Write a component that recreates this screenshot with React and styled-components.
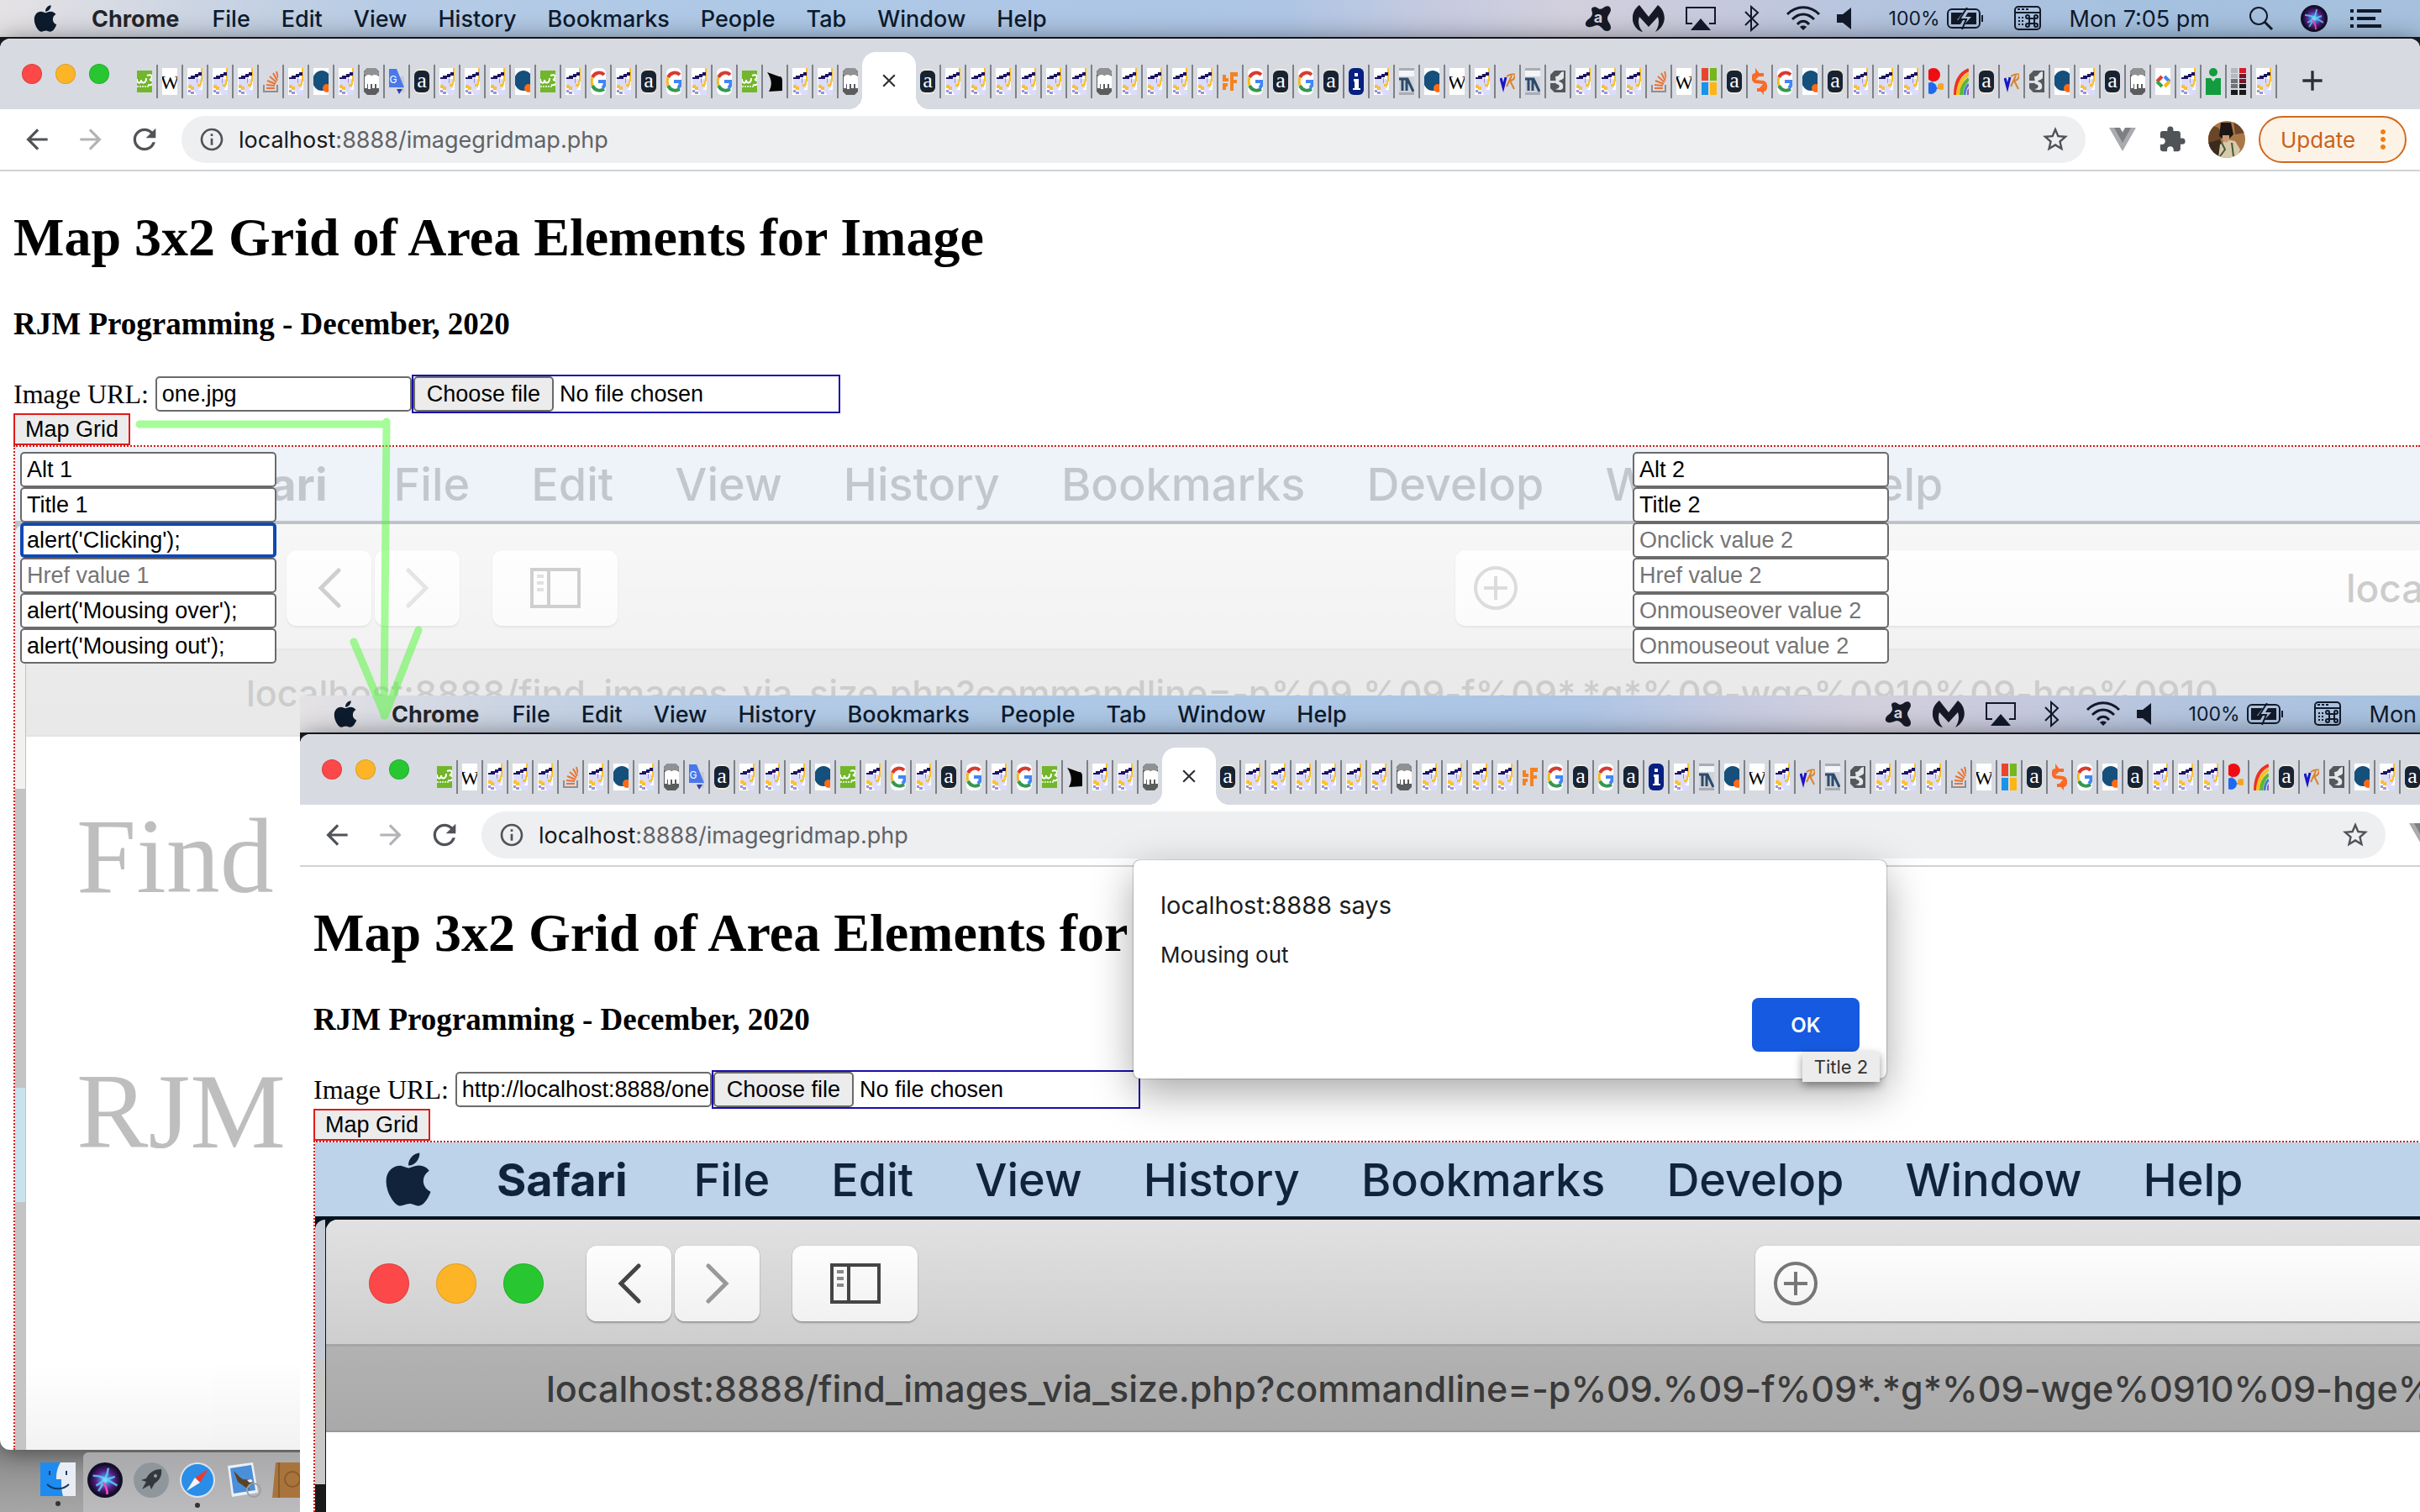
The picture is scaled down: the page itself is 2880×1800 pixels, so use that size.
import React from "react";
import styled, { createGlobalStyle } from "styled-components";
import { FaApple } from "react-icons/fa";
import {
  MdAdd,
  MdArrowBack,
  MdArrowForward,
  MdClose,
  MdExtension,
  MdInfoOutline,
  MdMoreVert,
  MdRefresh,
  MdStarBorder,
} from "react-icons/md";

const UI_FONT = `Inter, Roboto, "Liberation Sans", sans-serif`;
const PAGE_FONT = `"Liberation Serif", "Times New Roman", serif`;
const FORM_FONT = `"Liberation Sans", Arial, sans-serif`;

const CHROME_MENU = ["File", "Edit", "View", "History", "Bookmarks", "People", "Tab", "Window", "Help"];
const SAFARI_MENU = ["File", "Edit", "View", "History", "Bookmarks", "Develop", "Window", "Help"];

const rjm = (n) => Array(n).fill("rjm");
const TABS_BEFORE = [
  "w3", "wiki", ...rjm(3), "stack", "rjm", "quote", "rjm", "php", "translate", "amz",
  ...rjm(3), "quote", "w3", "rjm", "google", "rjm", "amz", "google", "rjm", "google",
  "w3", "flag", ...rjm(2), "php",
];
const TABS_AFTER = [
  "amz", ...rjm(6), "php", ...rjm(4), "cf", "google", "amz", "google", "amz", "info",
  "rjm", "pillar", "quote", "wiki", "rjm", "vr", "pillar", "swirl", ...rjm(3), "stack",
  "wiki", "windows", "amz", "script", "google", "quote", "amz", ...rjm(3), "balls",
  "rainbow", "amz", "vr", "swirl", "quote", "rjm", "amz", "php", "dev", "rjm", "person",
  "grid", "rjm",
];

const FIELDS = ["Alt", "Title", "Onclick value", "Href value", "Onmouseover value", "Onmouseout value"];
const CELLS = [
  ["Alt 1", "Title 1", "alert('Clicking');", "", "alert('Mousing over');", "alert('Mousing out');"],
  ["Alt 2", "Title 2", "", "", "", ""],
];

// favicons are cropped to 18x32 because the tabs are so narrow
const FAVICONS = {
  rjm: (
    <>
      <path d="M0 0h18v32H0z" fill="#fff" />
      <path d="M1 13h15v10l-3 3h5v6h-7l-3-5-7-4z" fill="#dcdcfb" />
      <path d="M16 0h2v16h-2zM15 15h2v5h-2zM12 19h4v3h-4zM1 20h4v2h3v4H4v-2H1z" fill="#fbc02d" />
      <path d="M1 11h3V9h5V7h4V5h4v4h-4v2H9v2H1z" fill="#1c1463" />
      <path d="M1 26h3v2h4v3H4v-2H1zM11 12h1v6h-1z" fill="#9a94d8" />
    </>
  ),
  w3: (
    <>
      <path d="M0 3h18v26H0z" fill="#72b62b" />
      <path d="M0 13c0 6 5 6 5 1 0 5 6 5 6-2M12 9c6-3 8 3 3 5 6 0 5 8-2 6" fill="none" stroke="#fff" strokeWidth="2" />
      <path d="M0 22h15" stroke="#d9efc2" strokeWidth="2" strokeDasharray="2 1" />
    </>
  ),
  wiki: (
    <>
      <path d="M0 0h18v32H0z" fill="#fff" />
      <text x="9" y="25" fontSize="24" textAnchor="middle" fontFamily="Liberation Serif" fill="#000">W</text>
    </>
  ),
  stack: (
    <>
      <path d="M1 20v8h16v-8" fill="none" stroke="#8b8f94" strokeWidth="2" />
      <path d="M4 24h10M4 20l10 1M5 15l10 4M8 10l8 7M12 6l5 9M16 4l2 8" stroke="#e87434" strokeWidth="2" />
    </>
  ),
  quote: (
    <>
      <path d="M0 0h18v32H0z" fill="#fff" />
      <ellipse cx="10" cy="15" rx="11" ry="12" fill="#154f7c" />
      <circle cx="16" cy="24" r="5" fill="#ff6a13" />
    </>
  ),
  php: (
    <>
      <path d="M4 0h10l4 4v24l-4 4H4l-4-4V4z" fill="#5b5c5e" />
      <path d="M4 0h10l4 5v3H0V5z" fill="#909193" />
      <path d="M1 11c1-4 7-3 8-2 3-2 8-1 9 1v14h-3v-5h-2v5h-3v-5H8v6H5v-6H4v5H1z" fill="#fff" />
    </>
  ),
  translate: (
    <>
      <path d="M9 10h9v19h-6z" fill="#c9ccd2" />
      <path d="M0 1h9l9 22H0z" fill="#4a78ea" />
      <path d="M9 25h7l-4 6z" fill="#2a3fb5" />
      <text x="5" y="18" fontSize="12" textAnchor="middle" fontFamily="Inter" fill="#fff">G</text>
    </>
  ),
  amz: (
    <>
      <rect y="1" width="18" height="30" rx="6" fill="#f0ead8" />
      <rect y="3" width="18" height="26" rx="6" fill="#172333" />
      <text x="9" y="23" fontSize="26" textAnchor="middle" fontFamily="Liberation Serif" fill="#fff">a</text>
    </>
  ),
  google: (
    <>
      <rect width="18" height="32" rx="6" fill="#fff" />
      <path d="M2 11C5 5 12 4 16 8" fill="none" stroke="#d93a2f" strokeWidth="4" />
      <path d="M2 11c-1 3-1 7 0 10" fill="none" stroke="#f6b91a" strokeWidth="3" />
      <path d="M2 21c3 6 9 7 14 4" fill="none" stroke="#34994f" strokeWidth="4" />
      <path d="M9 16h8c0 4-1 6-3 8" fill="none" stroke="#4285f4" strokeWidth="4" />
    </>
  ),
  flag: <path d="M0 5l14 5c3 0 4 2 4 5v12L2 28c4-7 4-14-2-23z" fill="#050505" />,
  cf: (
    <>
      <path d="M9 5h9v5h-5v4h4v4h-4v9H9z" fill="#f58220" />
      <path d="M0 8h4v4h3v4H0zM0 18h6v4H4v4H0z" fill="#f58220" />
    </>
  ),
  info: (
    <>
      <rect width="18" height="32" rx="6" fill="#061f80" />
      <path d="M6 13h6v11h2v2H5v-2h2v-8H6zM7 6h4v4H7z" fill="#fff" />
    </>
  ),
  pillar: (
    <>
      <path d="M0 0h18v32H0z" fill="#ced2da" />
      <path d="M0 3h18v7H0z" fill="#f3f5f8" />
      <path d="M0 0h18v3H0zM0 29h18v3H0z" fill="#a9adb2" />
      <path d="M0 13h10l7 15M4 14v13M9 14v13" fill="none" stroke="#2d4a6b" strokeWidth="3" />
    </>
  ),
  vr: (
    <>
      <path d="M1 12l3 11 3-12" fill="none" stroke="#1a14c8" strokeWidth="3" />
      <path d="M8 22l6-13M8 10c4-3 9-3 10-2M18 9c-1 5-4 6-6 6l5 10" fill="none" stroke="#d9822b" strokeWidth="2" />
    </>
  ),
  swirl: (
    <>
      <path d="M5 3h13v26H5L0 24v-6h8v-3H0V8z" fill="#55575a" />
      <path d="M6 10c6 0 4-5 10-6v7c0 3-5 3-6 5 4 1 6 3 5 8-2 3-6 2-9 1 5 0 7-5 1-6" fill="#e4e6ea" />
    </>
  ),
  windows: (
    <>
      <path d="M0 0h8v15H0z" fill="#e8452c" />
      <path d="M10 0h8v15h-8z" fill="#74b81c" />
      <path d="M0 17h8v15H0z" fill="#1a93e8" />
      <path d="M10 17h8v15h-8z" fill="#fdb515" />
    </>
  ),
  script: (
    <>
      <path d="M14 8H4c-3 0-3 7 0 8l9 1c4 1 4 8 1 9H6" fill="none" stroke="#fb6a25" strokeWidth="4" />
      <path d="M4 0l6 8-6 6zM14 18v14l-6-7z" fill="#fb6a25" />
    </>
  ),
  balls: (
    <>
      <path d="M6 8l-3 16h12" stroke="#999" strokeWidth="2" fill="none" />
      <circle cx="6" cy="8" r="8" fill="#f00d12" />
      <circle cx="3" cy="24" r="7" fill="#1d6af0" />
      <circle cx="15" cy="22" r="4" fill="#f8a51c" />
    </>
  ),
  rainbow: (
    <>
      <path d="M2 32C2 16 8 6 18 2" fill="none" stroke="#ee3124" strokeWidth="4" />
      <path d="M5 32C5 20 11 11 18 7" fill="none" stroke="#f7c21d" strokeWidth="4" />
      <path d="M9 32c0-9 4-15 9-19" fill="none" stroke="#5cb531" strokeWidth="4" />
      <path d="M13 32c0-5 2-10 5-13" fill="none" stroke="#3f7fd0" strokeWidth="3" />
      <path d="M16 32v-5l2-3v8z" fill="#9b59b6" />
    </>
  ),
  dev: (
    <>
      <path d="M0 0h18v32H0z" fill="#fff" />
      <path d="M8 10l-6 6" stroke="#e33b2e" strokeWidth="4" />
      <path d="M2 16l6 6" stroke="#31a350" strokeWidth="4" />
      <path d="M11 10l6 6" stroke="#4285f4" strokeWidth="4" />
      <path d="M17 16l-6 6" stroke="#f5b81c" strokeWidth="4" />
    </>
  ),
  person: (
    <>
      <circle cx="9" cy="5" r="5" fill="#139c3d" />
      <path d="M0 12h6l3 4 3-4h6v20H0z" fill="#139c3d" />
    </>
  ),
  grid: (
    <>
      <path d="M0 0h8v6H0zM0 7h8v5H0z" fill="#b6b8bd" />
      <path d="M0 13h8v5H0zM0 19h8v5H0z" fill="#717276" />
      <path d="M10 0h8v6h-8z" fill="#d51c2c" />
      <path d="M10 7h8v5h-8zM10 13h8v5h-8z" fill="#7d1326" />
      <path d="M0 26h8v6H0zM10 19h8v5h-8zM10 26h8v6h-8z" fill="#19191b" />
    </>
  ),
};

const SiriIcon = ({ size }) => (
  <svg width={size} height={size} viewBox="0 0 32 32" aria-hidden="true">
    <defs>
      <radialGradient id={`siri${size}`}>
        <stop offset="0" stopColor="#f4f6ff" />
        <stop offset="0.25" stopColor="#4a8be8" />
        <stop offset="0.6" stopColor="#5a1f86" />
        <stop offset="1" stopColor="#130c2c" />
      </radialGradient>
    </defs>
    <circle cx="16" cy="16" r="16" fill="#111026" />
    <circle cx="16" cy="16" r="14" fill={`url(#siri${size})`} />
    <path d="M5 12c8 0 12 3 22 9M19 5c-1 8-4 13-9 21M8 21c6-4 10-6 17-8" stroke="#59dcf5" strokeWidth="2" fill="none" opacity="0.8" />
    <path d="M14 18c3 3 4 6 4 11" stroke="#f24bb0" strokeWidth="2" fill="none" />
  </svg>
);

const StatusIcons = () => (
  <StatusArea>
    <StatusSlot $w={36}>
      <svg width="32" height="32" viewBox="0 0 32 32">
        <path d="M8 5c0-3 5-4 8-1 3 2 5 0 8-2 4-2 7 0 7 4-1 5-4 6-4 10s4 6 4 11c0 4-5 5-8 3-3-3-5-6-9-6-4 1-7 3-10 2-4-1-4-5-1-8 4-3 6-5 6-8 0-2-1-3-1-5z" fill="#171a26" />
        <text x="16" y="21" fontSize="18" fontWeight="700" textAnchor="middle" fontFamily="Inter" fill="#d3d2de">a</text>
      </svg>
    </StatusSlot>
    <StatusSlot $w={44}>
      <svg width="38" height="34" viewBox="0 0 38 34">
        <path d="M8 1l11 14L30 1c7 5 10 15 6 23-2 4-5 7-9 9 4-6 5-12 3-18L19 27 8 15c-2 6-1 12 4 18-5-1-9-5-11-10C-2 15 1 6 8 1z" fill="#171a26" />
      </svg>
    </StatusSlot>
    <StatusSlot $w={40}>
      <svg width="38" height="30" viewBox="0 0 38 30">
        <path d="M9 21H2V2h34v19h-7" fill="none" stroke="#121a2a" strokeWidth="2" />
        <path d="M19 15l12 14H7z" fill="#121a2a" />
      </svg>
    </StatusSlot>
    <StatusSlot $w={42}>
      <svg width="20" height="32" viewBox="0 0 20 32">
        <path d="M2 8l15 15-8 7V2l8 7L2 24" fill="none" stroke="#121a2a" strokeWidth="2" />
      </svg>
    </StatusSlot>
    <StatusSlot $w={40}>
      <svg width="42" height="32" viewBox="0 0 42 32">
        <path d="M2 11c11-11 27-11 38 0M8 17c8-8 18-8 26 0M14 23c4-5 10-5 14 0" fill="none" stroke="#121a2a" strokeWidth="3" />
        <path d="M21 30l-4-4c2-2 6-2 8 0z" fill="#121a2a" />
      </svg>
    </StatusSlot>
    <StatusSlot $w={42} $start>
      <svg width="18" height="26" viewBox="0 0 18 26">
        <path d="M0 8h7l10-8v26L7 18H0z" fill="#121a2a" />
      </svg>
    </StatusSlot>
    <Battery>
      100%
      <svg width="46" height="26" viewBox="0 0 46 26">
        <rect x="1" y="2" width="38" height="22" rx="5" fill="none" stroke="#121a2a" strokeWidth="2" />
        <path d="M5 6h14l-7 9h7l-3 5H5zM35 20H21l8-9h-7l3-5h10z" fill="#121a2a" />
        <path d="M24 0l-9 14h8l-5 12M42 9v8" stroke="#121a2a" strokeWidth="2" fill="none" />
      </svg>
    </Battery>
    <StatusSlot $w={60}>
      <svg width="32" height="30" viewBox="0 0 32 30">
        <rect x="1" y="1" width="30" height="27" rx="4" fill="none" stroke="#121a2a" strokeWidth="2" />
        <path d="M2 8h28" stroke="#121a2a" strokeWidth="2" />
        <path d="M4 4h3M9 4h3M14 4h3" stroke="#121a2a" strokeWidth="2" />
        <path d="M5 14h2M5 18h2M5 22h2M9 14h2M9 18h2M9 22h2" stroke="#121a2a" strokeWidth="2" />
        <g fill="none" stroke="#121a2a" strokeWidth="2">
          <path d="M18 15h6v6h-6z" />
          <circle cx="16" cy="13" r="2" />
          <circle cx="26" cy="13" r="2" />
          <circle cx="16" cy="23" r="2" />
          <circle cx="26" cy="23" r="2" />
        </g>
      </svg>
    </StatusSlot>
    <Clock>Mon 7:05 pm</Clock>
    <StatusSlot $w={42}>
      <svg width="30" height="30" viewBox="0 0 30 30">
        <circle cx="12" cy="12" r="10" fill="none" stroke="#121a2a" strokeWidth="2" />
        <path d="M19 19l9 9" stroke="#121a2a" strokeWidth="3" />
      </svg>
    </StatusSlot>
    <StatusSlot $w={44}>
      <SiriIcon size={32} />
    </StatusSlot>
    <StatusSlot $w={38}>
      <svg width="37" height="22" viewBox="0 0 37 22">
        <path d="M0 2h4M8 2h29M0 11h4M8 11h22M0 20h4M8 20h29" stroke="#121a2a" strokeWidth="4" />
      </svg>
    </StatusSlot>
  </StatusArea>
);

const Tab = ({ icon, last }) => (
  <TabItem $last={last}>
    <svg width="18" height="32" viewBox="0 0 18 32" aria-hidden="true">
      {FAVICONS[icon]}
    </svg>
  </TabItem>
);

// the picture that is loaded into the grid: the top left of a Safari window
const GridImage = ({ faded }) => (
  <Picture $faded={faded}>
    <SafariMenu>
      <FaApple size={72} />
      <strong>Safari</strong>
      {SAFARI_MENU.map((m) => (
        <span key={m}>{m}</span>
      ))}
    </SafariMenu>
    <SafariRow>
      <Behind />
      <SafariWindow>
        <SafariToolbar>
          <Lights $size={48} $gap={32}>
            <i />
            <i />
            <i />
          </Lights>
          <SafariNav>
            <SafariButton $w={101}>
              <svg width="28" height="48" viewBox="0 0 28 48">
                <path d="M25 3L4 24l21 21" fill="none" stroke="#444" strokeWidth="5" strokeLinecap="round" />
              </svg>
            </SafariButton>
            <SafariButton $w={101}>
              <svg width="28" height="48" viewBox="0 0 28 48">
                <path d="M3 3l21 21L3 45" fill="none" stroke="#999" strokeWidth="5" strokeLinecap="round" />
              </svg>
            </SafariButton>
          </SafariNav>
          <SafariButton $w={149}>
            <svg width="60" height="48" viewBox="0 0 60 48">
              <path d="M2 2h56v44H2zM22 2v44" fill="none" stroke="#444" strokeWidth="4" />
              <path d="M8 10h8M8 18h8M8 26h8" stroke="#888" strokeWidth="4" />
            </svg>
          </SafariButton>
          <SafariField>
            <svg width="52" height="52" viewBox="0 0 52 52">
              <circle cx="26" cy="26" r="24" fill="none" stroke="#777" strokeWidth="4" />
              <path d="M26 12v28M12 26h28" stroke="#777" strokeWidth="4" />
            </svg>
            <span>localhost</span>
          </SafariField>
        </SafariToolbar>
        <SafariTitle>
          localhost:8888/find_images_via_size.php?commandline=-p%09.%09-f%09*.*g*%09-wge%0910%09-hge%0910
        </SafariTitle>
        <SafariPage>
          <p>Find</p>
          <p>RJM</p>
        </SafariPage>
      </SafariWindow>
    </SafariRow>
  </Picture>
);

const Screen = ({ imageUrl, editing = false, children }) => (
  <ScreenWrapper>
    <MenuBar>
      <FaApple size={36} />
      <strong>Chrome</strong>
      {CHROME_MENU.map((m) => (
        <span key={m}>{m}</span>
      ))}
      <StatusIcons />
    </MenuBar>
    <BrowserWindow>
      <TabStrip>
        <Lights $size={24} $gap={16}>
          <i />
          <i />
          <i />
        </Lights>
        <TabList>
          {TABS_BEFORE.map((icon, key) => (
            <Tab key={`before_${key}`} icon={icon} last={key === TABS_BEFORE.length - 1} />
          ))}
          <ActiveTab>
            <TabButton aria-label="Close tab">
              <MdClose size={26} />
            </TabButton>
          </ActiveTab>
          {TABS_AFTER.map((icon, key) => (
            <Tab key={`after_${key}`} icon={icon} />
          ))}
        </TabList>
        <TabButton aria-label="New tab">
          <MdAdd size={40} />
        </TabButton>
      </TabStrip>
      <Toolbar>
        <ToolButton aria-label="Back">
          <MdArrowBack size={38} />
        </ToolButton>
        <ToolButton aria-label="Forward" $muted>
          <MdArrowForward size={38} />
        </ToolButton>
        <ToolButton aria-label="Reload">
          <MdRefresh size={40} />
        </ToolButton>
        <Omnibox>
          <MdInfoOutline size={32} />
          <Address>
            <b>localhost</b>:8888/imagegridmap.php
          </Address>
          <MdStarBorder size={36} />
        </Omnibox>
        <Extensions>
          <svg width="32" height="28" viewBox="0 0 32 28">
            <path d="M0 0h32L16 28z" fill="#a9abae" />
            <path d="M6 0h7l3 6 3-6h7L16 18z" fill="#7d7f83" />
            <path d="M13 0h6l-3 5z" fill="#fff" />
          </svg>
          <MdExtension size={34} />
          <svg width="44" height="44" viewBox="0 0 44 44">
            <clipPath id="face">
              <circle cx="22" cy="22" r="22" />
            </clipPath>
            <g clipPath="url(#face)">
              <path d="M0 0h44v44H0z" fill="#a87848" />
              <path d="M0 4l12 4 6 10-8 10-10 2zM30 0h14v14l-12 2z" fill="#6b4527" />
              <path d="M15 2h12l3 14-8 8-9-6z" fill="#1d1614" />
              <path d="M0 26l14-4 4 8-6 14H0z" fill="#3b2a1e" />
              <path d="M14 28l8-6 10 2 6 10-4 10H12z" fill="#d8c9a9" />
              <path d="M17 17h8v6l-4 3-4-3z" fill="#c99a76" />
              <path d="M16 26l4 8-6 8M28 26l2 16" stroke="#3d5a3c" strokeWidth="2" fill="none" />
            </g>
          </svg>
        </Extensions>
        <UpdateButton>
          Update
          <MdMoreVert size={36} />
        </UpdateButton>
      </Toolbar>
      <Page>
        <h1>Map 3x2 Grid of Area Elements for Image</h1>
        <h3>RJM Programming - December, 2020</h3>
        <FormRow>
          <UrlLabel>
            Image URL:
            <TextInput type="text" defaultValue={imageUrl} />
          </UrlLabel>
          <FileLabel>
            <FileButton>Choose file</FileButton>
            No file chosen
            <HiddenFile type="file" />
          </FileLabel>
        </FormRow>
        <MapButton>Map Grid</MapButton>
        <ImageBox>
          <GridImage faded={editing} />
          {editing && (
            <CellOverlay>
              {CELLS.map((values, c) => (
                <Cell key={`cell_${c}`}>
                  {values.map((value, i) => (
                    <TextInput
                      key={FIELDS[i]}
                      type="text"
                      aria-label={`${FIELDS[i]} ${c + 1}`}
                      placeholder={`${FIELDS[i]} ${c + 1}`}
                      defaultValue={value}
                      $active={c === 0 && i === 2}
                    />
                  ))}
                </Cell>
              ))}
            </CellOverlay>
          )}
        </ImageBox>
      </Page>
    </BrowserWindow>
    {editing && <Dock />}
    {children}
  </ScreenWrapper>
);

const Dock = () => (
  <DockRow>
    <DockStart>
      <DockApp $running>
        <svg width="42" height="40" viewBox="0 0 42 40">
          <path d="M0 0h42v40H0z" fill="#e8edf5" />
          <path d="M0 0h24c-4 7-5 12-5 20h6c0 8 0 13 2 20H0z" fill="#1e8bf0" />
          <path d="M11 10v5M31 10v5M8 26c7 7 19 7 26 0" fill="none" stroke="#143a66" strokeWidth="2" />
        </svg>
      </DockApp>
    </DockStart>
    <DockPanel>
      <DockApp>
        <SiriIcon size={42} />
      </DockApp>
      <DockApp>
        <svg width="42" height="42" viewBox="0 0 42 42">
          <circle cx="21" cy="21" r="21" fill="#8f979d" />
          <path d="M33 8c-9 0-14 4-18 11l-6 2 6 2-5 9 9-5 2 5 4-7c6-4 9-9 8-17z" fill="#33383c" />
          <circle cx="26" cy="16" r="2" fill="#9aa1a6" />
        </svg>
      </DockApp>
      <DockApp $running>
        <svg width="42" height="42" viewBox="0 0 42 42">
          <circle cx="21" cy="21" r="21" fill="#dfe3e8" />
          <circle cx="21" cy="21" r="19" fill="#2a8de8" />
          <path d="M34 8L24 24l-6-6z" fill="#ee3b30" />
          <path d="M8 34l10-16 6 6z" fill="#f5f5f5" />
        </svg>
      </DockApp>
      <DockApp>
        <svg width="42" height="42" viewBox="0 0 42 42">
          <path d="M2 4l30-4 6 36-31 5z" fill="#eef0f3" />
          <path d="M5 7l25-4 5 30-26 4z" fill="#4a8fd8" />
          <path d="M9 10l8 8 3 2 9 1 5 5-8 1 2 6-7-5-7-5z" fill="#5a4325" />
          <path d="M25 21l5-1 2 3-4 1z" fill="#f3efe4" />
          <circle cx="33" cy="33" r="8" fill="none" stroke="#9aa0a8" strokeWidth="2" />
        </svg>
      </DockApp>
      <DockApp>
        <svg width="42" height="42" viewBox="0 0 42 42">
          <path d="M4 0h38v42H0z" fill="#a9743c" />
          <path d="M8 0v42" stroke="#8a5b2b" strokeWidth="2" />
          <circle cx="24" cy="20" r="9" fill="none" stroke="#8a5b2b" strokeWidth="2" />
        </svg>
      </DockApp>
    </DockPanel>
  </DockRow>
);

const App = () => (
  <Desktop>
    <GlobalStyle />
    <Screen imageUrl="one.jpg" editing />
    <SecondScreen>
      <Screen imageUrl="http://localhost:8888/one">
        <Dialog role="alertdialog" aria-label="localhost:8888 says">
          <h2>localhost:8888 says</h2>
          <p>Mousing out</p>
          <OkButton>OK</OkButton>
          <Tooltip role="tooltip">Title 2</Tooltip>
        </Dialog>
      </Screen>
    </SecondScreen>
    <Arrow width="520" height="880" viewBox="0 0 520 880" aria-hidden="true">
      <path d="M166 505H460M460 502L457 852M421 764L458 852L498 750" />
    </Arrow>
  </Desktop>
);

export default App;

const GlobalStyle = createGlobalStyle`
  * {
    box-sizing: border-box;
  }
  body {
    margin: 0;
    overflow: hidden;
    font-family: ${UI_FONT};
  }
  button, input {
    font: inherit;
    margin: 0;
  }
  svg {
    flex: none;
    display: block;
  }
`;

const Desktop = styled.main`
  position: relative;
  overflow: hidden;
`;
const SecondScreen = styled.section`
  position: absolute;
  left: 357px;
  top: 828px;
  width: 100%;
`;
const Arrow = styled.svg`
  position: absolute;
  left: 0;
  top: 0;
  fill: none;
  stroke: rgba(76, 250, 50, 0.5);
  stroke-width: 9px;
  stroke-linecap: round;
  stroke-linejoin: round;
  pointer-events: none;
`;
const ScreenWrapper = styled.div`
  position: relative;
  display: flex;
  flex-direction: column;
  height: 100vh;
  overflow: hidden;
  background: linear-gradient(#04070f 0, #22222c 60px, #858585 95%, #a6a6a6 100%);
`;

const MenuBar = styled.header`
  display: flex;
  align-items: center;
  gap: 37px;
  height: 44px;
  flex: none;
  padding: 0 46px 0 36px;
  font-size: 27px;
  font-weight: 500;
  white-space: nowrap;
  color: #0d1b2e;
  background: linear-gradient(
    90deg,
    #e5e2e4 0%,
    #c9d3e3 9%,
    #b6cbe5 16%,
    #adc8e6 32%,
    #aec5e5 53%,
    #c5cae0 59%,
    #d3d0dd 65%,
    #c9cadd 70%,
    #b3c4df 78%,
    #a5c1e0 88%,
    #a6c0dd 100%
  );
  strong {
    margin-right: 2px;
    font-weight: 700;
    color: #22252b;
  }
`;
const StatusArea = styled.div`
  display: flex;
  align-items: center;
  gap: 20px;
  margin-left: auto;
  font-weight: 400;
`;
const StatusSlot = styled.div`
  display: flex;
  justify-content: ${({ $start }) => ($start ? "flex-start" : "center")};
  width: ${({ $w }) => $w}px;
`;
const Battery = styled.div`
  display: flex;
  align-items: center;
  justify-content: space-between;
  gap: 8px;
  font-size: 23px;
`;
const Clock = styled.time`
  padding-right: 20px;
`;

const BrowserWindow = styled.div`
  display: flex;
  flex-direction: column;
  flex: 1;
  min-height: 0;
  margin-top: 2px;
  overflow: hidden;
  border-radius: 12px;
  background: #fff;
  box-shadow: 0 2px 30px rgba(0, 0, 0, 0.5);
`;
const TabStrip = styled.div`
  display: flex;
  align-items: flex-end;
  height: 84px;
  flex: none;
  padding-left: 26px;
  background: #d7dae1;
`;
const Lights = styled.div`
  display: flex;
  gap: ${({ $gap }) => $gap}px;
  ${({ $size }) => ($size === 24 ? "align-self: center;" : "")}
  i {
    width: ${({ $size }) => $size}px;
    height: ${({ $size }) => $size}px;
    border-radius: 50%;
    background: #fc4848;
    box-shadow: inset 0 0 0 1px rgba(0, 0, 0, 0.12);
  }
  i:nth-child(2) {
    background: #fdb427;
  }
  i:nth-child(3) {
    background: #28c732;
  }
`;
const TabList = styled.div`
  display: flex;
  align-items: flex-end;
  margin-left: 28px;
`;
const TabItem = styled.div`
  display: flex;
  align-items: center;
  justify-content: center;
  width: ${({ $last }) => ($last ? "28px" : "30px")};
  height: 40px;
  margin-bottom: 13px;
  border-right: ${({ $last }) => ($last ? "0" : "2px solid #7d8087")};
`;
const ActiveTab = styled.div`
  position: relative;
  display: flex;
  align-items: center;
  justify-content: center;
  width: 64px;
  height: 68px;
  border-radius: 16px 16px 0 0;
  background: #fff;
  &::before,
  &::after {
    content: "";
    position: absolute;
    bottom: 0;
    width: 16px;
    height: 16px;
  }
  &::before {
    right: 100%;
    background: radial-gradient(circle at 0 0, transparent 16px, #fff 16px);
  }
  &::after {
    left: 100%;
    background: radial-gradient(circle at 100% 0, transparent 16px, #fff 16px);
  }
`;
const TabButton = styled.button`
  display: flex;
  align-self: center;
  padding: 0;
  border: 0;
  background: none;
  color: #2d2f33;
  ${TabList} + & {
    align-self: flex-end;
    margin: 0 0 14px 22px;
  }
`;

const Toolbar = styled.div`
  display: flex;
  align-items: center;
  height: 74px;
  flex: none;
  padding: 0 16px 0 24px;
  border-bottom: 2px solid #d0d2d6;
  background: #fff;
`;
const ToolButton = styled.button`
  display: flex;
  justify-content: center;
  width: 40px;
  padding: 0;
  margin-right: 24px;
  border: 0;
  background: none;
  color: ${({ $muted }) => ($muted ? "#b1b3b6" : "#505357")};
`;
const Omnibox = styled.div`
  display: flex;
  align-items: center;
  flex: 1;
  gap: 16px;
  height: 56px;
  padding: 0 18px 0 20px;
  border-radius: 28px;
  background: #eeeff1;
  color: #505357;
`;
const Address = styled.div`
  flex: 1;
  font-size: 27px;
  color: #5f6368;
  b {
    font-weight: 400;
    color: #17191c;
  }
`;
const Extensions = styled.div`
  display: flex;
  align-items: center;
  gap: 26px;
  padding: 0 16px 0 28px;
  color: #505357;
`;
const UpdateButton = styled.button`
  display: flex;
  align-items: center;
  justify-content: space-between;
  width: 176px;
  height: 56px;
  padding: 0 8px 0 24px;
  border: 2px solid #d2691e;
  border-radius: 28px;
  background: #fcf3e6;
  font-size: 26px;
  color: #c9621c;
  svg {
    color: #ee8012;
  }
`;

const Page = styled.div`
  display: flex;
  flex-direction: column;
  align-items: flex-start;
  flex: 1;
  min-height: 0;
  padding-left: 16px;
  font-family: ${PAGE_FONT};
  font-size: 32px;
  color: #000;
  h1 {
    margin: 42px 0 44px;
    font-size: 64px;
    line-height: 74px;
  }
  h3 {
    margin: 0 0 38px;
    font-size: 37px;
    line-height: 44px;
  }
`;
const FormRow = styled.div`
  display: flex;
  align-items: center;
  height: 46px;
`;
const UrlLabel = styled.label`
  display: flex;
  align-items: center;
  gap: 8px;
`;
const TextInput = styled.input`
  width: 305px;
  height: 42px;
  padding: ${({ $active }) => ($active ? "0 0 0 4px" : "2px 0 2px 6px")};
  border: ${({ $active }) => ($active ? "4px solid #1149b4" : "2px solid #6b6b6b")};
  border-radius: 5px;
  background: #fff;
  font-family: ${FORM_FONT};
  font-size: 27px;
  color: #000;
  &::placeholder {
    color: #757575;
  }
`;
const FileLabel = styled.label`
  display: flex;
  align-items: center;
  gap: 7px;
  width: 510px;
  height: 46px;
  border: 2px solid #1a0dab;
  font-family: ${FORM_FONT};
  font-size: 27px;
`;
const FileButton = styled.span`
  padding: 4px 14px;
  border: 2px solid #6b6b6b;
  border-radius: 5px;
  background: #ececec;
  line-height: 30px;
`;
const HiddenFile = styled.input`
  position: absolute;
  width: 1px;
  height: 1px;
  opacity: 0;
`;
const MapButton = styled.button`
  height: 38px;
  padding: 0 12px;
  border: 2px solid #e01b1b;
  background: #ececec;
  font-family: ${FORM_FONT};
  font-size: 27px;
  line-height: 34px;
  color: #000;
`;
const ImageBox = styled.div`
  position: relative;
  align-self: stretch;
  flex: 1;
  min-height: 0;
  overflow: hidden;
  border-top: 2px dotted #d01c1c;
  border-left: 2px dotted #d01c1c;
`;
const CellOverlay = styled.div`
  position: absolute;
  inset: 0;
  display: grid;
  grid-template-columns: repeat(3, 1919px);
  align-items: start;
  padding: 6px;
`;
const Cell = styled.div`
  display: grid;
  justify-items: start;
`;

const Picture = styled.div`
  display: flex;
  flex-direction: column;
  width: 5757px;
  height: 100%;
  opacity: ${({ $faded }) => ($faded ? 0.25 : 1)};
  font-family: ${UI_FONT};
`;
const SafariMenu = styled.div`
  display: flex;
  align-items: center;
  gap: 73px;
  height: 92px;
  flex: none;
  padding-left: 75px;
  border-bottom: 4px solid #06121f;
  background: #bcd3ea;
  font-size: 54px;
  font-weight: 500;
  color: #11233a;
  white-space: nowrap;
  svg {
    margin-right: -4px;
  }
  strong {
    margin-right: 6px;
  }
`;
const SafariRow = styled.div`
  display: flex;
  flex: 1;
  min-height: 0;
  background: #06121f;
`;
const Behind = styled.div`
  width: 12px;
  margin-right: 1px;
  border-radius: 12px 0 0 0;
  background: linear-gradient(
    #c5cbd6 168px,
    #c9c9c7 168px 315px,
    #1a1a1a 315px 671px,
    #2a93ba 671px 807px,
    #1a1a1a 807px
  );
`;
const SafariWindow = styled.div`
  display: flex;
  flex-direction: column;
  flex: 1;
  overflow: hidden;
  border-radius: 14px 0 0 0;
  background: #fff;
`;
const SafariToolbar = styled.div`
  display: flex;
  align-items: center;
  height: 151px;
  flex: none;
  padding: 3px 0 0 51px;
  border-bottom: 3px solid #a5a5a5;
  background: linear-gradient(#e2e1e1, #cecece);
`;
const SafariNav = styled.div`
  display: flex;
  gap: 4px;
  margin: 0 39px 0 51px;
`;
const SafariButton = styled.div`
  display: flex;
  align-items: center;
  justify-content: center;
  width: ${({ $w }) => $w}px;
  height: 90px;
  border-radius: 12px;
  background: linear-gradient(#fdfdfe, #f1f1f1);
  box-shadow: 0 2px 2px rgba(0, 0, 0, 0.25), 0 0 1px rgba(0, 0, 0, 0.4);
`;
const SafariField = styled.div`
  display: flex;
  align-items: center;
  gap: 986px;
  flex: 1;
  height: 90px;
  margin: 0 0 0 997px;
  padding-left: 22px;
  border-radius: 12px;
  background: linear-gradient(#fdfdfe, #f1f1f1);
  box-shadow: 0 2px 2px rgba(0, 0, 0, 0.25), 0 0 1px rgba(0, 0, 0, 0.4);
  font-size: 46px;
  font-weight: 500;
  color: #3a3a3a;
`;
const SafariTitle = styled.div`
  height: 102px;
  flex: none;
  padding-left: 262px;
  border-bottom: 2px solid #979797;
  background: linear-gradient(#b2b2b2, #a9a9a9);
  font-size: 43px;
  font-weight: 500;
  line-height: 100px;
  color: #3a3a3a;
  white-space: nowrap;
`;
const SafariPage = styled.div`
  flex: 1;
  padding: 68px 60px 0;
  background: linear-gradient(transparent 88%, rgba(0, 0, 0, 0.2));
  font-family: ${PAGE_FONT};
  font-size: 128px;
  line-height: 148px;
  color: #000;
  p {
    margin: 0 0 156px;
  }
`;

const Dialog = styled.div`
  position: absolute;
  left: 50%;
  top: 196px;
  display: flex;
  flex-direction: column;
  width: 896px;
  height: 260px;
  margin-left: -448px;
  padding: 32px;
  border-radius: 8px;
  background: #fff;
  box-shadow: 0 0 2px rgba(0, 0, 0, 0.6), 0 16px 50px rgba(0, 0, 0, 0.35);
  color: #1b1c1f;
  h2 {
    margin: 0;
    font-size: 29px;
    font-weight: 400;
    line-height: 44px;
  }
  p {
    margin: 21px 0 0;
    font-size: 26px;
    line-height: 32px;
  }
`;
const OkButton = styled.button`
  width: 128px;
  height: 64px;
  margin: auto 0 0 auto;
  border: 0;
  border-radius: 8px;
  background: #155ae0;
  font-size: 24px;
  font-weight: 600;
  color: #fff;
`;
const Tooltip = styled.div`
  position: absolute;
  right: 8px;
  bottom: -4px;
  width: 92px;
  line-height: 36px;
  background: #ececec;
  box-shadow: 0 4px 10px rgba(0, 0, 0, 0.4);
  font-size: 22px;
  text-align: center;
  color: #333;
`;

const DockRow = styled.div`
  display: flex;
  height: 74px;
  flex: none;
`;
const DockStart = styled.div`
  width: 99px;
  padding: 15px 0 0 48px;
`;
const DockPanel = styled.div`
  display: flex;
  gap: 13px;
  flex: 1;
  margin-top: 3px;
  padding: 12px 5px 0;
  border-radius: 6px 0 0 0;
  background: linear-gradient(#a9a9ab, #bcbcbe);
`;
const DockApp = styled.div`
  display: flex;
  flex-direction: column;
  align-items: center;
  width: 42px;
  &::after {
    content: "";
    width: 6px;
    height: 6px;
    margin-top: 6px;
    border-radius: 50%;
    background: ${({ $running }) => ($running ? "#333" : "transparent")};
  }
`;
